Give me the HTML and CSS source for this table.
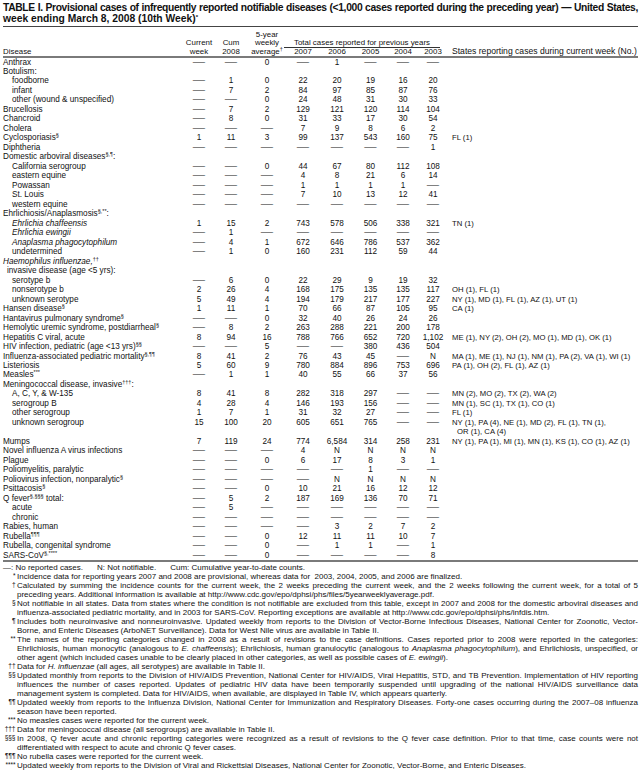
FILE: index.html
```html
<!DOCTYPE html>
<html lang="en">
<head>
<meta charset="utf-8">
<title>Table I</title>
<link rel="stylesheet" href="styles.css">
</head>
<body>
<div class="page">
  <div class="title">
    <div class="l1">TABLE I. Provisional cases of infrequently reported notifiable diseases (&lt;1,000 cases reported during the preceding year) — United States,</div>
    <div>week ending March 8, 2008 (10th Week)<sup class="ts">*</sup></div>
  </div>
  <table class="tbl">
    <colgroup>
      <col class="c0"><col class="c1"><col class="c2"><col class="c3"><col class="c4"><col class="c5"><col class="c6"><col class="c7"><col class="c8"><col class="c9">
    </colgroup>
    <thead>
      <tr class="h1"><td></td><td></td><td></td><td>5-year</td><td colspan="5"></td><td></td></tr>
      <tr class="h2"><td></td><td>Current</td><td>Cum</td><td>weekly</td><td colspan="5"><span class="tot">Total cases reported for previous years</span></td><td></td></tr>
      <tr class="h3"><td class="d">Disease</td><td>week</td><td>2008</td><td>average<sup class="s">†</sup></td><td>2007</td><td>2006</td><td>2005</td><td>2004</td><td>2003</td><td class="sh">States reporting cases during current week (No.)</td></tr>
    </thead>
    <tbody>
      <tr><td class="d">Anthrax</td><td class="z">—</td><td class="z">—</td><td>0</td><td class="z">—</td><td>1</td><td class="z">—</td><td class="z">—</td><td class="z">—</td><td class="st"></td></tr>
      <tr><td class="d" colspan="10">Botulism:</td></tr>
      <tr><td class="d i1">foodborne</td><td class="z">—</td><td>1</td><td>0</td><td>22</td><td>20</td><td>19</td><td>16</td><td>20</td><td class="st"></td></tr>
      <tr><td class="d i1">infant</td><td class="z">—</td><td>7</td><td>2</td><td>84</td><td>97</td><td>85</td><td>87</td><td>76</td><td class="st"></td></tr>
      <tr><td class="d i1">other (wound &amp; unspecified)</td><td class="z">—</td><td class="z">—</td><td>0</td><td>24</td><td>48</td><td>31</td><td>30</td><td>33</td><td class="st"></td></tr>
      <tr><td class="d">Brucellosis</td><td class="z">—</td><td>7</td><td>2</td><td>129</td><td>121</td><td>120</td><td>114</td><td>104</td><td class="st"></td></tr>
      <tr><td class="d">Chancroid</td><td class="z">—</td><td>8</td><td>0</td><td>31</td><td>33</td><td>17</td><td>30</td><td>54</td><td class="st"></td></tr>
      <tr><td class="d">Cholera</td><td class="z">—</td><td class="z">—</td><td class="z">—</td><td>7</td><td>9</td><td>8</td><td>6</td><td>2</td><td class="st"></td></tr>
      <tr><td class="d">Cyclosporiasis<sup class="s">§</sup></td><td>1</td><td>11</td><td>3</td><td>99</td><td>137</td><td>543</td><td>160</td><td>75</td><td class="st">FL (1)</td></tr>
      <tr><td class="d">Diphtheria</td><td class="z">—</td><td class="z">—</td><td class="z">—</td><td class="z">—</td><td class="z">—</td><td class="z">—</td><td class="z">—</td><td>1</td><td class="st"></td></tr>
      <tr><td class="d" colspan="10">Domestic arboviral diseases<sup class="s">§,¶</sup>:</td></tr>
      <tr><td class="d i1">California serogroup</td><td class="z">—</td><td class="z">—</td><td>0</td><td>44</td><td>67</td><td>80</td><td>112</td><td>108</td><td class="st"></td></tr>
      <tr><td class="d i1">eastern equine</td><td class="z">—</td><td class="z">—</td><td class="z">—</td><td>4</td><td>8</td><td>21</td><td>6</td><td>14</td><td class="st"></td></tr>
      <tr><td class="d i1">Powassan</td><td class="z">—</td><td class="z">—</td><td class="z">—</td><td>1</td><td>1</td><td>1</td><td>1</td><td class="z">—</td><td class="st"></td></tr>
      <tr><td class="d i1">St. Louis</td><td class="z">—</td><td class="z">—</td><td class="z">—</td><td>7</td><td>10</td><td>13</td><td>12</td><td>41</td><td class="st"></td></tr>
      <tr><td class="d i1">western equine</td><td class="z">—</td><td class="z">—</td><td class="z">—</td><td class="z">—</td><td class="z">—</td><td class="z">—</td><td class="z">—</td><td class="z">—</td><td class="st"></td></tr>
      <tr><td class="d" colspan="10">Ehrlichiosis/Anaplasmosis<sup class="s">§,**</sup>:</td></tr>
      <tr><td class="d i1"><i>Ehrlichia chaffeensis</i></td><td>1</td><td>15</td><td>2</td><td>743</td><td>578</td><td>506</td><td>338</td><td>321</td><td class="st">TN (1)</td></tr>
      <tr><td class="d i1"><i>Ehrlichia ewingii</i></td><td class="z">—</td><td>1</td><td class="z">—</td><td class="z">—</td><td class="z">—</td><td class="z">—</td><td class="z">—</td><td class="z">—</td><td class="st"></td></tr>
      <tr><td class="d i1"><i>Anaplasma phagocytophilum</i></td><td class="z">—</td><td>4</td><td>1</td><td>672</td><td>646</td><td>786</td><td>537</td><td>362</td><td class="st"></td></tr>
      <tr><td class="d i1">undetermined</td><td class="z">—</td><td>1</td><td>0</td><td>160</td><td>231</td><td>112</td><td>59</td><td>44</td><td class="st"></td></tr>
      <tr><td class="d" colspan="10"><i>Haemophilus influenzae,</i><sup class="s">††</sup></td></tr>
      <tr><td class="d ih" colspan="10">invasive disease (age &lt;5 yrs):</td></tr>
      <tr><td class="d i1">serotype b</td><td class="z">—</td><td>6</td><td>0</td><td>22</td><td>29</td><td>9</td><td>19</td><td>32</td><td class="st"></td></tr>
      <tr><td class="d i1">nonserotype b</td><td>2</td><td>26</td><td>4</td><td>168</td><td>175</td><td>135</td><td>135</td><td>117</td><td class="st">OH (1), FL (1)</td></tr>
      <tr><td class="d i1">unknown serotype</td><td>5</td><td>49</td><td>4</td><td>194</td><td>179</td><td>217</td><td>177</td><td>227</td><td class="st">NY (1), MD (1), FL (1), AZ (1), UT (1)</td></tr>
      <tr><td class="d">Hansen disease<sup class="s">§</sup></td><td>1</td><td>11</td><td>1</td><td>70</td><td>66</td><td>87</td><td>105</td><td>95</td><td class="st">CA (1)</td></tr>
      <tr><td class="d">Hantavirus pulmonary syndrome<sup class="s">§</sup></td><td class="z">—</td><td class="z">—</td><td>0</td><td>32</td><td>40</td><td>26</td><td>24</td><td>26</td><td class="st"></td></tr>
      <tr><td class="d">Hemolytic uremic syndrome, postdiarrheal<sup class="s">§</sup></td><td class="z">—</td><td>8</td><td>2</td><td>263</td><td>288</td><td>221</td><td>200</td><td>178</td><td class="st"></td></tr>
      <tr><td class="d">Hepatitis C viral, acute</td><td>8</td><td>94</td><td>16</td><td>788</td><td>766</td><td>652</td><td>720</td><td>1,102</td><td class="st">ME (1), NY (2), OH (2), MO (1), MD (1), OK (1)</td></tr>
      <tr><td class="d">HIV infection, pediatric (age &lt;13 yrs)<sup class="s">§§</sup></td><td class="z">—</td><td class="z">—</td><td>5</td><td class="z">—</td><td class="z">—</td><td>380</td><td>436</td><td>504</td><td class="st"></td></tr>
      <tr><td class="d">Influenza-associated pediatric mortality<sup class="s">§,¶¶</sup></td><td>8</td><td>41</td><td>2</td><td>76</td><td>43</td><td>45</td><td class="z">—</td><td>N</td><td class="st">MA (1), ME (1), NJ (1), NM (1), PA (2), VA (1), WI (1)</td></tr>
      <tr><td class="d">Listeriosis</td><td>5</td><td>60</td><td>9</td><td>780</td><td>884</td><td>896</td><td>753</td><td>696</td><td class="st">PA (1), OH (2), FL (1), AZ (1)</td></tr>
      <tr><td class="d">Measles<sup class="s">***</sup></td><td class="z">—</td><td>1</td><td>1</td><td>40</td><td>55</td><td>66</td><td>37</td><td>56</td><td class="st"></td></tr>
      <tr><td class="d" colspan="10">Meningococcal disease, invasive<sup class="s">†††</sup>:</td></tr>
      <tr><td class="d i1">A, C, Y, &amp; W-135</td><td>8</td><td>41</td><td>8</td><td>282</td><td>318</td><td>297</td><td class="z">—</td><td class="z">—</td><td class="st">MN (2), MO (2), TX (2), WA (2)</td></tr>
      <tr><td class="d i1">serogroup B</td><td>4</td><td>28</td><td>4</td><td>146</td><td>193</td><td>156</td><td class="z">—</td><td class="z">—</td><td class="st">MN (1), SC (1), TX (1), CO (1)</td></tr>
      <tr><td class="d i1">other serogroup</td><td>1</td><td>7</td><td>1</td><td>31</td><td>32</td><td>27</td><td class="z">—</td><td class="z">—</td><td class="st">FL (1)</td></tr>
      <tr><td class="d i1">unknown serogroup</td><td>15</td><td>100</td><td>20</td><td>605</td><td>651</td><td>765</td><td class="z">—</td><td class="z">—</td><td class="st">NY (1), PA (4), NE (1), MD (2), FL (1), TN (1),</td></tr>
      <tr><td colspan="9"></td><td class="st cont">OR (1), CA (4)</td></tr>
      <tr><td class="d">Mumps</td><td>7</td><td>119</td><td>24</td><td>774</td><td>6,584</td><td>314</td><td>258</td><td>231</td><td class="st">NY (1), PA (1), MI (1), MN (1), KS (1), CO (1), AZ (1)</td></tr>
      <tr><td class="d">Novel influenza A virus infections</td><td class="z">—</td><td class="z">—</td><td class="z">—</td><td>4</td><td>N</td><td>N</td><td>N</td><td>N</td><td class="st"></td></tr>
      <tr><td class="d">Plague</td><td class="z">—</td><td class="z">—</td><td>0</td><td>6</td><td>17</td><td>8</td><td>3</td><td>1</td><td class="st"></td></tr>
      <tr><td class="d">Poliomyelitis, paralytic</td><td class="z">—</td><td class="z">—</td><td class="z">—</td><td class="z">—</td><td class="z">—</td><td>1</td><td class="z">—</td><td class="z">—</td><td class="st"></td></tr>
      <tr><td class="d">Poliovirus infection, nonparalytic<sup class="s">§</sup></td><td class="z">—</td><td class="z">—</td><td class="z">—</td><td class="z">—</td><td>N</td><td>N</td><td>N</td><td>N</td><td class="st"></td></tr>
      <tr><td class="d">Psittacosis<sup class="s">§</sup></td><td class="z">—</td><td class="z">—</td><td>0</td><td>10</td><td>21</td><td>16</td><td>12</td><td>12</td><td class="st"></td></tr>
      <tr><td class="d">Q fever<sup class="s">§,§§§</sup> total:</td><td class="z">—</td><td>5</td><td>2</td><td>187</td><td>169</td><td>136</td><td>70</td><td>71</td><td class="st"></td></tr>
      <tr><td class="d i1">acute</td><td class="z">—</td><td>5</td><td class="z">—</td><td class="z">—</td><td class="z">—</td><td class="z">—</td><td class="z">—</td><td class="z">—</td><td class="st"></td></tr>
      <tr><td class="d i1">chronic</td><td class="z">—</td><td class="z">—</td><td class="z">—</td><td class="z">—</td><td class="z">—</td><td class="z">—</td><td class="z">—</td><td class="z">—</td><td class="st"></td></tr>
      <tr><td class="d">Rabies, human</td><td class="z">—</td><td class="z">—</td><td class="z">—</td><td class="z">—</td><td>3</td><td>2</td><td>7</td><td>2</td><td class="st"></td></tr>
      <tr><td class="d">Rubella<sup class="s">¶¶¶</sup></td><td class="z">—</td><td class="z">—</td><td>0</td><td>12</td><td>11</td><td>11</td><td>10</td><td>7</td><td class="st"></td></tr>
      <tr><td class="d">Rubella, congenital syndrome</td><td class="z">—</td><td class="z">—</td><td>0</td><td class="z">—</td><td>1</td><td>1</td><td class="z">—</td><td>1</td><td class="st"></td></tr>
      <tr class="last"><td class="d">SARS-CoV<sup class="s">§,****</sup></td><td class="z">—</td><td class="z">—</td><td>0</td><td class="z">—</td><td class="z">—</td><td class="z">—</td><td class="z">—</td><td>8</td><td class="st"></td></tr>
    </tbody>
  </table>
  <div class="notes">
    <div class="key"><span>—: No reported cases.</span><span>N: Not notifiable.</span><span>Cum: Cumulative year-to-date counts.</span></div>
    <div class="fn"><div class="mk">*</div><div class="tx"><div class="ll">Incidence data for reporting years 2007 and 2008 are provisional, whereas data for&nbsp; 2003, 2004, 2005, and 2006 are finalized.</div></div></div>
    <div class="fn"><div class="mk">†</div><div class="tx"><div class="ln">Calculated by summing the incidence counts for the current week, the 2 weeks preceding the current week, and the 2 weeks following the current week, for a total of 5</div><div class="ll">preceding years. Additional information is available at http://www.cdc.gov/epo/dphsi/phs/files/5yearweeklyaverage.pdf.</div></div></div>
    <div class="fn"><div class="mk">§</div><div class="tx"><div class="ln">Not notifiable in all states. Data from states where the condition is not notifiable are excluded from this table, except in 2007 and 2008 for the domestic arboviral diseases and</div><div class="ll">influenza-associated pediatric mortality, and in 2003 for SARS-CoV. Reporting exceptions are available at http://www.cdc.gov/epo/dphsi/phs/infdis.htm.</div></div></div>
    <div class="fn"><div class="mk">¶</div><div class="tx"><div class="ln">Includes both neuroinvasive and nonneuroinvasive. Updated weekly from reports to the Division of Vector-Borne Infectious Diseases, National Center for Zoonotic, Vector-</div><div class="ll">Borne, and Enteric Diseases (ArboNET Surveillance). Data for West Nile virus are available in Table II.</div></div></div>
    <div class="fn"><div class="mk">**</div><div class="tx"><div class="ln">The names of the reporting categories changed in 2008 as a result of revisions to the case definitions. Cases reported prior to 2008 were reported in the categories:</div><div class="ln">Ehrlichiosis, human monocytic (analogous to <i>E. chaffeensis</i>); Ehrlichiosis, human granulocytic (analogous to <i>Anaplasma phagocytophilum</i>), and Ehrlichiosis, unspecified, or</div><div class="ll">other agent (which included cases unable to be clearly placed in other categories, as well as possible cases of <i>E. ewingii</i>).</div></div></div>
    <div class="fn"><div class="mk">††</div><div class="tx"><div class="ll">Data for <i>H. influenzae</i> (all ages, all serotypes) are available in Table II.</div></div></div>
    <div class="fn"><div class="mk">§§</div><div class="tx"><div class="ln">Updated monthly from reports to the Division of HIV/AIDS Prevention, National Center for HIV/AIDS, Viral Hepatitis, STD, and TB Prevention. Implementation of HIV reporting</div><div class="ln">influences the number of cases reported. Updates of pediatric HIV data have been temporarily suspended until upgrading of the national HIV/AIDS surveillance data</div><div class="ll">management system is completed. Data for HIV/AIDS, when available, are displayed in Table IV, which appears quarterly.</div></div></div>
    <div class="fn"><div class="mk">¶¶</div><div class="tx"><div class="ln">Updated weekly from reports to the Influenza Division, National Center for Immunization and Respiratory Diseases. Forty-one cases occurring during the 2007–08 influenza</div><div class="ll">season have been reported.</div></div></div>
    <div class="fn"><div class="mk">***</div><div class="tx"><div class="ll">No measles cases were reported for the current week.</div></div></div>
    <div class="fn"><div class="mk">†††</div><div class="tx"><div class="ll">Data for meningococcal disease (all serogroups) are available in Table II.</div></div></div>
    <div class="fn"><div class="mk">§§§</div><div class="tx"><div class="ln">In 2008, Q fever acute and chronic reporting categories were recognized as a result of revisions to the Q fever case definition. Prior to that time, case counts were not</div><div class="ll">differentiated with respect to acute and chronic Q fever cases.</div></div></div>
    <div class="fn"><div class="mk">¶¶¶</div><div class="tx"><div class="ll">No rubella cases were reported for the current week.</div></div></div>
    <div class="fn"><div class="mk">****</div><div class="tx"><div class="ll">Updated weekly from reports to the Division of Viral and Rickettsial Diseases, National Center for Zoonotic, Vector-Borne, and Enteric Diseases.</div></div></div>
  </div>
</div>
</body>
</html>
```

FILE: styles.css
```css
html, body {
  margin: 0;
  padding: 0;
  background: #fff;
}
body {
  font-family: "Liberation Sans", Arial, Helvetica, sans-serif;
  color: #111;
}
.page {
  width: 635px;
  padding: 2px 3px 0 3px;
}
.title {
  font-weight: bold;
  font-size: 10.3px;
  line-height: 11px;
  padding-bottom: 1.5px;
  border-bottom: 1px solid #444;
}
.title .l1 {
  letter-spacing: -0.35px;
  word-spacing: -0.5px;
  text-align: justify;
  text-align-last: justify;
}
.ts {
  font-size: 6px;
  line-height: 0;
  vertical-align: 3px;
}
.tbl {
  border-collapse: collapse;
  table-layout: fixed;
  width: 635px;
  font-size: 8.2px;
  margin-top: 4.5px;
}
.c0 { width: 180px; }
.c1 { width: 32px; }
.c2 { width: 32px; }
.c3 { width: 40px; }
.c4 { width: 32px; }
.c5 { width: 36px; }
.c6 { width: 31px; }
.c7 { width: 34px; }
.c8 { width: 26px; }
.c9 { width: 192px; }
.tbl td {
  padding: 0;
  text-align: center;
  white-space: nowrap;
  overflow: visible;
}
.tbl thead td {
  font-size: 7.9px;
}
.tbl thead .h1 td {
  height: 8px;
  line-height: 8px;
  vertical-align: bottom;
}
.tbl thead .h2 td {
  height: 9px;
  line-height: 7.5px;
  vertical-align: top;
}
.tbl thead .h3 td {
  height: 7.5px;
  line-height: 7.5px;
  vertical-align: bottom;
  border-bottom: 2px solid #7a7a7a;
}
.tot {
  display: block;
  line-height: 7.5px;
  margin: 0 6px 0 -3px;
  border-bottom: 1px solid #333;
}
.tbl tbody td {
  height: 9.48px;
  line-height: 9.48px;
}
.tbl tbody .last td {
  border-bottom: 2px solid #7a7a7a;
}
.tbl td.d {
  text-align: left;
}
.tbl td.i1 {
  padding-left: 9px;
}
.tbl td.ih {
  padding-left: 4px;
}
.tbl td.z {
  transform: scaleX(1.5);
}
.tbl td.st {
  text-align: left;
  padding-left: 6px;
  font-size: 7.7px;
}
.tbl thead td.sh {
  text-align: left;
  padding-left: 6px;
  font-size: 8.6px;
}
.tbl td.cont {
  padding-left: 11px;
}
.s {
  font-size: 5.5px;
  line-height: 0;
  vertical-align: 3px;
}
.notes {
  font-size: 8px;
  line-height: 9px;
  padding-top: 0.5px;
}
.key span {
  margin-right: 14px;
}
.fn {
  display: grid;
  grid-template-columns: 14px 1fr;
}
.mk {
  text-align: right;
  padding-right: 1.5px;
  font-size: 6.5px;
  line-height: 7px;
}
.tx .ln {
  text-align: justify;
  text-align-last: justify;
}
.tx .ll {
  text-align: left;
}
```
